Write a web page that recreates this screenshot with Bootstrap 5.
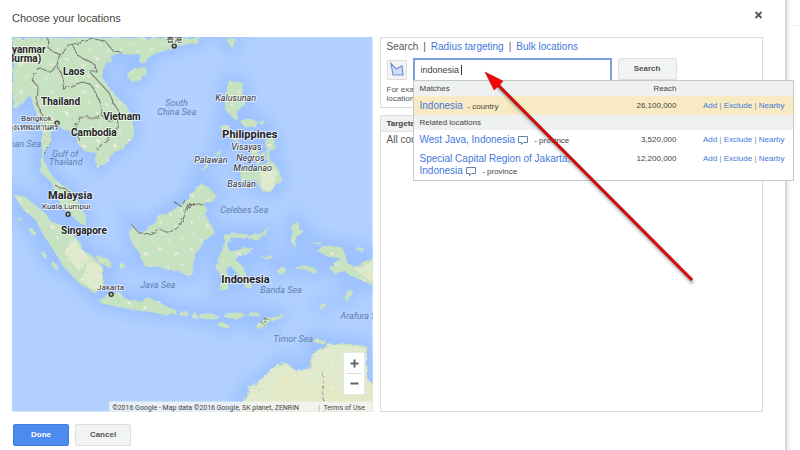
<!DOCTYPE html>
<html lang="en">
<head>
<meta charset="utf-8">
<meta name="viewport" content="width=device-width, initial-scale=1">
<title>Choose your locations</title>
<link rel="stylesheet" href="https://cdn.jsdelivr.net/npm/bootstrap@5.3.0/dist/css/bootstrap.min.css">
<style>
body{font-family:"Liberation Sans",Arial,sans-serif;font-size:8px;line-height:10px;color:#444;background:#fff;overflow-x:hidden}
a{color:#3f78dc;text-decoration:none}
.backdrop-edge{background:#fff;min-height:100vh;padding-right:13px}
.dialog{min-height:100vh;padding:11px 22px 5px 12px;border-right:2px solid #d4d8d8;box-shadow:3px 0 2px #f1f2f2}
.page-line{position:absolute;right:0;top:25px;width:12px;border-top:1px solid #eee}
.dialog h1{font-size:11px;line-height:14px;font-weight:400;margin:0;color:#444}
.close-btn{border:0;background:none;padding:0;width:9px;height:9px;display:flex}
.panes{gap:7px;margin-top:12px}
.map-pane{flex:361 1 0;min-width:0}
.side-pane{flex:384 1 0;min-width:0}
.map-pane>svg{display:block;width:100%;height:auto}
.box{border:1px solid #dcdcdc}
.search-box{padding:3px 6px;height:71px}
.modes{font-size:10px;line-height:12px;color:#555;gap:5px}
.field-row{gap:6px;margin-top:5px;align-items:flex-start}
.shape-btn{width:20px;height:20px;padding:0;border:1px solid #ddd;background:#f3f3f3;margin-top:2px;border-radius:1px}
.shape-btn svg{display:block}
.query{width:199px;height:23px;border:2px solid #78a0dc;border-bottom-width:1px;border-radius:0;padding:0 6px 1px;font-size:9px;color:#444;outline:0}
.caret{position:absolute;left:48px;top:7px;width:1px;height:10px;background:#333}
.grey-btn{font-size:8px;line-height:10px;font-weight:700;color:#555;background:#f2f3f3;border:1px solid #dedede;border-radius:2px}
.find-btn{width:59px;height:22px;padding:0}
.hint{margin:4px 0 0;width:100px;line-height:9px;color:#555}
.targets{margin-top:7px}
.targets h2{font-size:8px;line-height:15px;font-weight:700;margin:0;padding:0 6px;background:#f0f1f1;border-bottom:1px solid #e2e2e2;color:#444}
.targets p{font-size:10px;line-height:12px;margin:2px 6px;color:#555}
.suggest{position:absolute;left:32px;top:42px;width:381px;background:#fff;border:1px solid #c3cac7;z-index:2}
.suggest table{width:100%;border-collapse:collapse;table-layout:fixed}
.suggest th{font-weight:400;background:#eff0f0;height:15px;padding:0 6px;color:#444}
.suggest td{padding:4px 6px 3px;vertical-align:top;line-height:11px}
.suggest .place{font-size:10px}
.suggest .amount{text-align:right;width:70px}
.suggest .acts{width:110px;text-align:right;padding-right:8px;padding-left:0;white-space:nowrap;color:#888}
.suggest .picked td{background:#f8ebc3}
.suggest svg{margin:0 6px 0 1px;vertical-align:-2px}
.arrow-mark{position:absolute;left:480px;top:68px;z-index:3;pointer-events:none}
.footer-row{gap:6px;margin:12px 0 0 1px}
.footer-row .btn{width:56px;height:22px;padding:0;font-size:8px;line-height:10px;font-weight:700;border-radius:2px}
.done-btn,.done-btn:hover{background:#4d8bee;border:1px solid #407ee5;color:#fff}
.land{fill:#c7e2c1}
.tan{fill:#dfe9cb}
.border-line{fill:none;stroke:#777;stroke-width:1;stroke-linejoin:round}
.map-text{font-family:Roboto,"Noto Sans CJK TC",sans-serif;paint-order:stroke;stroke:#fff;stroke-opacity:.6;stroke-width:2px;stroke-linejoin:round;fill:#333;font-size:8px}
.nation{font-weight:700;font-size:10px;fill:#222}
.nation-lg{font-weight:700;font-size:11px;fill:#222}
.isle{font-style:italic;font-size:9px}
.sea{font-style:italic;font-size:9px;fill:#5d7fae;stroke:none}
</style>
<script src="https://cdn.jsdelivr.net/npm/bootstrap@5.3.0/dist/js/bootstrap.bundle.min.js"></script>
</head>
<body>
<div class="backdrop-edge position-relative">
<div class="page-line"></div>
<main class="dialog">
  <header class="d-flex justify-content-between align-items-start">
    <h1>Choose your locations</h1>
    <button class="close-btn" type="button" aria-label="Close"><svg width="9" height="9" viewBox="0 0 9 9"><path d="M1.500 1l6 6M7.500 1l-6 6" stroke="#555" stroke-width="1.800"/></svg></button>
  </header>
  <div class="panes d-flex">
    <section class="map-pane" aria-label="Map">
      <svg viewBox="12 37 360 374">
        <defs>
          <filter id="coast" x="-5%" y="-5%" width="110%" height="110%"><feTurbulence type="fractalNoise" baseFrequency=".16" numOctaves="3" seed="4"/><feDisplacementMap in="SourceGraphic" scale="5"/></filter>
          <filter id="glow"><feGaussianBlur stdDeviation="8"/></filter>
          <pattern id="speck" width="31" height="27" patternUnits="userSpaceOnUse"><path d="M2 3h2v1h2v2H3zM19 8h3v2h-2v1h-2zM12 1h1v1h-1zM5 16h2v1H5zM25 20h3v1h-2v2h-1zM13 22h1v2h-2z" fill="#eeeedb"/><path d="M24 2h1v1h-1zM9 10h1v1H9zM18 17h1v1h-1z" fill="#b3d2ad"/></pattern>
          <pattern id="sand" width="5" height="4" patternUnits="userSpaceOnUse"><path d="M0 0h2v1H0zM3 2h2v1H3z" fill="#f8e5b5"/></pattern>
          <g id="lands">
            <path d="M12 37H200L196 42L186 43L170 48L156 52L147 56L142 63L138 61L139 54L125 52L112 55L107 60L102 67L101 75L105 83L115 95L125 104L130 116L133 127L131 140L118 149L108 158L96 167L94 156L96 152L84 150L75 141L75 131L62 128L57 124L51 130L50 142L42 155L45 165L52 176L60 183L70 189L77 200L83 212L86 225L79 222L70 214L60 205L55 195L51 182L39 170L40 150L42 135L38 118L34 109L29 93L22 102L12 108Z"/>
            <path d="M12 193L25 196L32 202L45 213L50 220L60 224L72 234L80 242L80 248L91 254L98 262L103 267L103 287L92 291L78 282L62 265L50 245L40 230L35 219L22 208Z"/>
            <path d="M130 223L140 233L149 224L158 215L170 210L184 200L195 187L199 181L208 186L217 197L205 203L205 215L214 231L203 240L198 250L192 258L192 272L187 275L178 270L160 267L143 265L138 251L131 243L129 235Z"/>
            <path d="M221 246L223 236L230 231L250 234L260 232L267 226L264 234L255 238L230 236L226 243L228 250L235 249L242 247L252 247L248 251L238 254L235 259L242 266L246 275L251 286L244 286L236 272L229 264L225 266L227 278L227 288L218 290L220 275L214 265L218 255Z"/>
            <path d="M315 249L328 244L340 246L344 253L346 262L352 265L372 256V285L360 279L350 275L343 270L333 272L327 266L335 262L338 257L325 255Z"/>
            <path d="M98 299L108 292L118 291L125 298L140 300L146 296L157 300L164 305L174 308L176 313L162 313L145 310L120 306L101 302Z"/>
            <path d="M238 411L243 397L248 386L254 391L259 385L266 374L273 365L284 360L295 370L305 368L309 360L315 349L325 343L345 342L366 345L364 355L367 370L365 378L372 383V411Z"/>
            <path d="M228 80L242 82L241 92L245 99L242 105L236 109L237 117L234 119L224 109L223 97L225 88Z"/>
            <path d="M239 168L252 169L270 159L278 169L280 181L273 184L271 192L260 189L254 178L241 183Z"/>
            <path d="M200 170L207 161L216 154L219 147L220 153L211 160L203 170Z"/>
            <path d="M127 73L133 67L144 66L146 70L140 79L131 81L127 77Z"/>
            <path d="M224 37H235L231 48Z"/>
            <path d="M291 223L296 219L297 228L303 230L295 235L294 247L289 239Z"/>
            <path d="M254 324L265 316L285 312L273 319L257 328Z"/>
            <path d="M219 125L228 123L229 131L238 136L234 140L224 134Z"/>
            <ellipse cx="248" cy="122" rx="8" ry="4"/><ellipse cx="261" cy="122" rx="3" ry="2"/>
            <ellipse cx="253" cy="151" rx="4" ry="7"/><ellipse cx="269" cy="142" rx="5" ry="7"/><ellipse cx="267" cy="154" rx="2" ry="7"/>
            <ellipse cx="259" cy="157" rx="3" ry="8" transform="rotate(25 259 157)"/>
            <ellipse cx="103" cy="260" rx="8" ry="4" transform="rotate(28 103 260)"/><ellipse cx="121" cy="265" rx="3" ry="2"/>
            <ellipse cx="182" cy="312" rx="5" ry="2"/><ellipse cx="193" cy="314" rx="3" ry="3"/><ellipse cx="207" cy="315" rx="10" ry="3"/>
            <ellipse cx="233" cy="314" rx="11" ry="3"/><ellipse cx="253" cy="313" rx="6" ry="2"/><ellipse cx="222" cy="324" rx="7" ry="3" transform="rotate(23 222 324)"/>
            <ellipse cx="280" cy="269" rx="5" ry="3"/><path d="M290 267L302 264L315 268L314 272L302 268Z"/>
            <ellipse cx="267" cy="256" rx="7" ry="1"/><ellipse cx="316" cy="242" rx="5" ry="1"/><ellipse cx="358" cy="248" rx="4" ry="2"/>
            <ellipse cx="347" cy="294" rx="3" ry="6" transform="rotate(25 347 294)"/><ellipse cx="322" cy="305" rx="4" ry="2" transform="rotate(-50 322 305)"/>
            <ellipse cx="32" cy="231" rx="4" ry="2" transform="rotate(45 32 231)"/><ellipse cx="43" cy="253" rx="2" ry="4" transform="rotate(-30 43 253)"/><ellipse cx="19" cy="218" rx="3" ry="1" transform="rotate(40 19 218)"/><ellipse cx="54" cy="265" rx="2" ry="4" transform="rotate(-35 54 265)"/>
            <ellipse cx="318" cy="340" rx="7" ry="2"/><ellipse cx="123" cy="207" rx="1" ry="1"/>
          </g>
        </defs>
        <rect x="12" y="37" width="360" height="374" fill="#b2d1ff"/>
        <use href="#lands" fill="#94bbff" stroke="#94bbff" stroke-width="14" filter="url(#glow)" opacity=".75"/>
        <g filter="url(#coast)" transform="translate(1 1)">
          <use href="#lands" class="land"/>
          <path class="tan" d="M238 411L248 388L273 366L284 361L295 370L307 367L315 350L330 343L364 346L366 378L372 383V411ZM88 258L102 267V286L91 288L80 279ZM353 268L372 260V282ZM258 172L276 168L272 190L261 188ZM72 238L88 256L78 270L62 250Z"/>
          <use href="#lands" fill="url(#speck)"/>
          <path d="M252 411L266 392L285 372L294 370L306 384L322 373L341 389L372 397V411Z" fill="url(#sand)"/>
          <path class="border-line" d="M47 37L48 48L60 55L55 65L50 71L37 67L31 79L37 86L36 102L39 110L43 117M55 65L60 71L63 82L62 88L72 84L82 81L90 84L98 98L101 110L98 117L79 117L74 126L78 139M60 55L67 44L78 42L92 38L104 40L113 51L121 52M72 45L77 55L85 59L94 64L95 70L88 70L98 81L108 92L113 103L118 111L117 126L107 137L98 146L95 148M101 115L107 119L117 119M50 139L43 153M54 184L62 187L70 191M130 223L139 233L150 232L158 228L166 231L177 228L184 213L188 203L204 204M173 201L180 205L184 199"/>
          <path d="M322 372V411" stroke="#9fabb0" stroke-dasharray="4 2" fill="none"/>
          <path d="M258 319l5 4M262 317l5 1-4 3" class="border-line"/>
        </g>
        <g fill="#bbb" stroke="#333" stroke-width="1.300"><circle cx="174" cy="46" r="2"/><circle cx="57" cy="123" r="2"/><circle cx="68" cy="214" r="2"/><circle cx="111" cy="294" r="2"/></g>
        <g class="map-text">
          <text x="12" y="53" class="nation">yanmar</text><text x="8" y="62" class="nation">Burma)</text><text x="166" y="42">香港</text>
          <text x="63" y="75" class="nation">Laos</text><text x="41" y="105" class="nation">Thailand</text><text x="103" y="120" class="nation">Vietnam</text><text x="71" y="136" class="nation">Cambodia</text>
          <text x="21" y="121">Bangkok</text><text x="4" y="130">กรุงเทพมหานคร</text>
          <text x="222" y="138" class="nation-lg">Philippines</text><text x="48" y="199" class="nation-lg">Malaysia</text><text x="42" y="209">Kuala Lumpur</text><text x="61" y="234" class="nation">Singapore</text><text x="221" y="283" class="nation-lg">Indonesia</text><text x="97" y="290">Jakarta</text>
          <g class="isle"><text x="215" y="101">Kalusunan</text><text x="231" y="150">Visayas</text><text x="236" y="161">Negros</text><text x="233" y="171">Mindanao</text><text x="194" y="163">Palawan</text><text x="227" y="187">Basilan</text></g>
          <g class="sea"><text x="165" y="106">South</text><text x="157" y="115">China Sea</text><text x="-13" y="147">Andaman Sea</text><text x="52" y="157">Gulf of</text><text x="49" y="165">Thailand</text><text x="220" y="213">Celebes Sea</text><text x="140" y="288">Java Sea</text><text x="260" y="293">Banda Sea</text><text x="273" y="342">Timor Sea</text><text x="340" y="319">Arafura Sea</text></g>
        </g>
        <rect x="109" y="401" width="263" height="10" fill="#f2f4f4" opacity=".85"/>
        <g font-family="Roboto,sans-serif" font-size="7" fill="#444"><text x="112" y="409">©2016 Google - Map data ©2016 Google, SK planet, ZENRIN</text><text x="318" y="409" fill="#999">|</text><a href="#"><text x="323" y="409" fill="#444">Terms of Use</text></a></g>
        <rect x="343" y="352" width="21" height="42" rx="1" fill="#fff" stroke="#ddd" stroke-width=".5"/><path d="M346 373h15" stroke="#ddd"/><path d="M350 363h8M354 359v8M350 383h8" stroke="#666" stroke-width="2"/>
      </svg>
    </section>
    <section class="side-pane d-flex flex-column">
      <div class="box search-box position-relative">
        <nav class="modes d-flex" aria-label="Search modes"><span>Search</span><span>|</span><a href="#">Radius targeting</a><span>|</span><a href="#">Bulk locations</a></nav>
        <div class="field-row d-flex">
          <button class="shape-btn" type="button" aria-label="Draw area"><svg width="18" height="18" viewBox="0 0 18 18"><path d="M3 2.500L8 8l6-3 1 9H5z" fill="#cfe0f8" stroke="#6e93cc" stroke-width="1.200"/></svg></button>
          <div class="position-relative d-flex"><input class="query" type="text" value="indonesia" aria-label="Location"><span class="caret"></span></div>
          <button class="grey-btn find-btn" type="button">Search</button>
        </div>
        <p class="hint">For example, a country, city, location</p>
        <div class="suggest">
          <table>
            <thead><tr><th scope="col">Matches</th><th scope="col" class="amount">Reach</th><th class="acts"></th></tr></thead>
            <tbody>
              <tr class="picked"><td><a class="place" href="#">Indonesia</a>&nbsp; - country</td><td class="amount">26,100,000</td><td class="acts"><a href="#">Add</a> | <a href="#">Exclude</a> | <a href="#">Nearby</a></td></tr>
              <tr><th colspan="3">Related locations</th></tr>
              <tr><td><a class="place" href="#">West Java, Indonesia</a> <svg width="10" height="9" viewBox="0 0 10 9"><path d="M.5.500h9v6H5.500L3.500 8.500v-2h-3z" fill="#fff" stroke="#6682aa"/></svg>- province</td><td class="amount">3,520,000</td><td class="acts"><a href="#">Add</a> | <a href="#">Exclude</a> | <a href="#">Nearby</a></td></tr>
              <tr><td><a class="place" href="#">Special Capital Region of Jakarta,<br>Indonesia</a> <svg width="10" height="9" viewBox="0 0 10 9"><path d="M.5.500h9v6H5.500L3.500 8.500v-2h-3z" fill="#fff" stroke="#6682aa"/></svg>- province</td><td class="amount">12,200,000</td><td class="acts"><a href="#">Add</a> | <a href="#">Exclude</a> | <a href="#">Nearby</a></td></tr>
            </tbody>
          </table>
        </div>
      </div>
      <div class="box targets flex-grow-1"><h2>Targeted locations</h2><p>All countries and territories</p></div>
    </section>
  </div>
  <footer class="footer-row d-flex"><button class="btn done-btn" type="button">Done</button><button class="btn grey-btn" type="button">Cancel</button></footer>
</main>
<svg class="arrow-mark" width="220" height="220" viewBox="480 68 220 220" aria-hidden="true">
  <defs><filter id="soft"><feGaussianBlur stdDeviation="1.500"/></filter></defs>
  <path d="M498 87L693 283" stroke="#666" stroke-width="3" opacity=".6" filter="url(#soft)"/>
  <path d="M497 84L692 280" stroke="#7b1010" stroke-width="3"/><path d="M497 84L692 280" stroke="#f00808" stroke-width="2"/>
  <path d="M485 72L503 81L499 86L494 90Z" fill="#f00808" stroke="#a01010" stroke-width=".5"/>
</svg>
</div>
</body>
</html>
